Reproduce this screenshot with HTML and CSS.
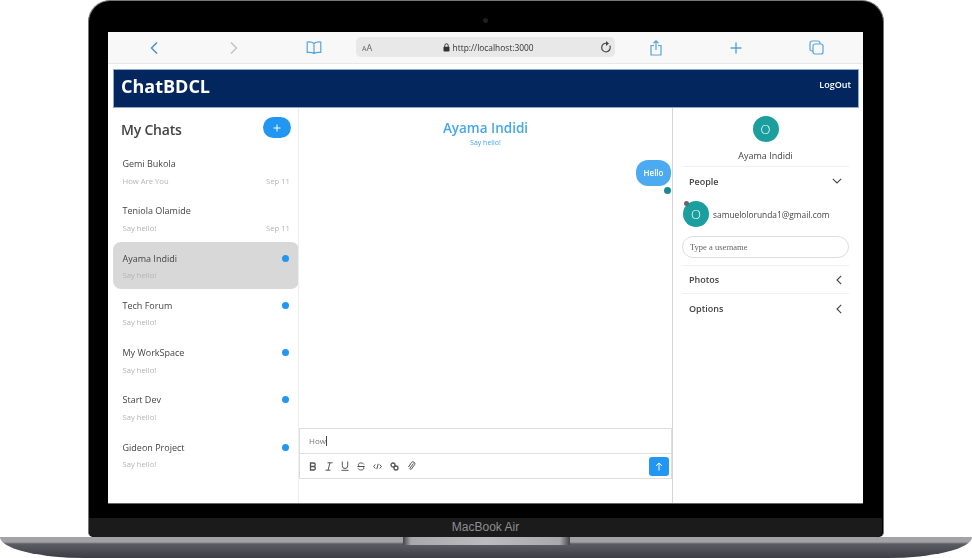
FILE: index.html
```html
<!DOCTYPE html>
<html lang="en">
<head>
    <meta charset="UTF-8">
    <title>ChatBDCL</title>
    <link rel="stylesheet" href="styles.css">
</head>
<body>
    <div class="laptop">
        <div class="lid">
            <div class="lid-top"><span class="camera"></span></div>
            <div class="screen">
                <div class="safari">
                    <div class="safari-cell">
                        <svg width="10" height="14" viewBox="0 0 10 14"><path d="M8 1.5 2.5 7 8 12.5" fill="none" stroke="#4a90c8" stroke-width="1.5"/></svg>
                    </div>
                    <div class="safari-cell">
                        <svg width="10" height="14" viewBox="0 0 10 14"><path d="M2 1.5 7.5 7 2 12.5" fill="none" stroke="#c4c4c4" stroke-width="1.5"/></svg>
                    </div>
                    <div class="safari-cell">
                        <svg width="16" height="13" viewBox="0 0 16 13"><path d="M8 2.5C6.5 1 4 .8 1.2 1v10.4c2.800-.2 5.300 0 6.800 1 1.500-1 4-1.200 6.800-1V1C12 .8 9.500 1 8 2.500Zm0 0v10" fill="none" stroke="#5aa3da" stroke-width="1.200"/></svg>
                    </div>
                    <div class="url-bar">
                        <span class="url-aa"><small>A</small>A</span>
                        <span class="url-text">
                            <svg width="7" height="9" viewBox="0 0 7 9"><path d="M1.800 4V2.500a1.700 1.700 0 0 1 3.400 0V4" fill="none" stroke="#333" stroke-width="1"/><rect x=".5" y="3.800" width="6" height="4.700" rx=".8" fill="#333"/></svg>
                            http://localhost:3000
                        </span>
                        <svg class="url-reload" width="12" height="13" viewBox="0 0 12 13"><path d="M9.800 4.600a4.300 4.300 0 1 1-2.700-2.200" fill="none" stroke="#444" stroke-width="1.200"/><path d="M6 0v5l3-2.500z" fill="#444"/></svg>
                    </div>
                    <div class="safari-cell">
                        <svg width="12" height="16" viewBox="0 0 12 16"><path d="M4 5.500H1v9.500h10V5.500H8M6 10V1M3.500 3.200 6 .8l2.500 2.400" fill="none" stroke="#5aa3da" stroke-width="1.200"/></svg>
                    </div>
                    <div class="safari-cell">
                        <svg width="12" height="12" viewBox="0 0 12 12"><path d="M6 .5v11M.5 6h11" fill="none" stroke="#5aa3da" stroke-width="1.400"/></svg>
                    </div>
                    <div class="safari-cell">
                        <svg width="15" height="15" viewBox="0 0 15 15"><rect x="4" y="4" width="10" height="10" rx="2" fill="none" stroke="#5aa3da" stroke-width="1.200"/><path d="M4 11H3a2 2 0 0 1-2-2V3a2 2 0 0 1 2-2h6a2 2 0 0 1 2 2v1" fill="none" stroke="#5aa3da" stroke-width="1.200"/></svg>
                    </div>
                </div>

                <div class="app">
                    <header class="app-header">
                        <span class="logo">ChatBDCL</span>
                        <a class="logout">LogOut</a>
                    </header>
                    <div class="columns">
                        <aside class="chats">
                            <div class="chats-head">
                                <h2>My Chats</h2>
                                <button class="add-btn">
                                    <svg width="8" height="8" viewBox="0 0 8 8"><path d="M4 .5v7M.5 4h7" stroke="#fff" stroke-width="1"/></svg>
                                </button>
                            </div>
                            <div class="chat">
                                <div class="chat-row"><span class="chat-name">Gemi Bukola</span></div>
                                <div class="chat-row"><span class="chat-msg">How Are You</span><span class="chat-date">Sep 11</span></div>
                            </div>
                            <div class="chat">
                                <div class="chat-row"><span class="chat-name">Teniola Olamide</span></div>
                                <div class="chat-row"><span class="chat-msg">Say hello!</span><span class="chat-date">Sep 11</span></div>
                            </div>
                            <div class="chat active">
                                <div class="chat-row"><span class="chat-name">Ayama Indidi</span><span class="unread"></span></div>
                                <div class="chat-row"><span class="chat-msg">Say hello!</span></div>
                            </div>
                            <div class="chat">
                                <div class="chat-row"><span class="chat-name">Tech Forum</span><span class="unread"></span></div>
                                <div class="chat-row"><span class="chat-msg">Say hello!</span></div>
                            </div>
                            <div class="chat">
                                <div class="chat-row"><span class="chat-name">My WorkSpace</span><span class="unread"></span></div>
                                <div class="chat-row"><span class="chat-msg">Say hello!</span></div>
                            </div>
                            <div class="chat">
                                <div class="chat-row"><span class="chat-name">Start Dev</span><span class="unread"></span></div>
                                <div class="chat-row"><span class="chat-msg">Say hello!</span></div>
                            </div>
                            <div class="chat">
                                <div class="chat-row"><span class="chat-name">Gideon Project</span><span class="unread"></span></div>
                                <div class="chat-row"><span class="chat-msg">Say hello!</span></div>
                            </div>
                        </aside>

                        <main class="feed">
                            <div class="feed-head">
                                <div class="feed-title">Ayama Indidi</div>
                                <div class="feed-sub">Say hello!</div>
                            </div>
                            <div class="messages">
                                <div class="bubble">Hello</div>
                                <span class="read-dot"></span>
                            </div>
                            <div class="composer">How<span class="caret"></span></div>
                            <div class="toolbar">
                                <svg width="8" height="9" viewBox="0 0 8 9"><path d="M1.500 1h3a1.700 1.700 0 0 1 0 3.500h-3zm0 3.500h3.500a1.800 1.800 0 0 1 0 3.500H1.500z" fill="none" stroke="#555" stroke-width="1.300"/></svg>
                                <svg width="8" height="9" viewBox="0 0 8 9"><path d="M2.500.8h5M.5 8.200h5M5 .8 3 8.200" fill="none" stroke="#555" stroke-width="1"/></svg>
                                <svg width="8" height="10" viewBox="0 0 8 10"><path d="M1.300.5v4.300a2.700 2.700 0 0 0 5.400 0V.5M.5 9.300h7" fill="none" stroke="#555" stroke-width="1"/></svg>
                                <svg width="8" height="9" viewBox="0 0 8 9"><path d="M6.800 2.300C6 .4 1.400.4 1.400 2.700c0 .8.500 1.300 1.100 1.700M1.200 6.500c.8 2 5.600 2.100 5.600-.2 0-.7-.3-1.300-.8-1.700M.3 4.500h7.400" fill="none" stroke="#555" stroke-width="1"/></svg>
                                <svg width="9" height="7" viewBox="0 0 9 7"><path d="M2.300 1.500.6 3.500l1.700 2M6.700 1.500l1.700 2-1.700 2M5.200.8 3.800 6.200" fill="none" stroke="#555" stroke-width="1"/></svg>
                                <svg width="9" height="9" viewBox="0 0 9 9"><circle cx="3" cy="3" r="2" fill="none" stroke="#555" stroke-width="1.300"/><circle cx="6" cy="6" r="2" fill="none" stroke="#555" stroke-width="1.300"/></svg>
                                <svg width="9" height="10" viewBox="0 0 9 10"><path d="M6.500 2.500 3 7a.9.9 0 0 0 1.400 1.100l3.300-4.600A1.900 1.900 0 0 0 4.700 1.300L1.400 6" fill="none" stroke="#555" stroke-width="1"/></svg>
                                <button class="send-btn">
                                    <svg width="8" height="9" viewBox="0 0 8 9"><path d="M4 8.500V1M1 3.800 4 1l3 2.800" fill="none" stroke="#fff" stroke-width="1"/></svg>
                                </button>
                            </div>
                        </main>

                        <aside class="details">
                            <div class="details-user">
                                <div class="avatar">O</div>
                                <div class="details-name">Ayama Indidi</div>
                            </div>
                            <div class="section section-people">
                                <span>People</span>
                                <svg width="10" height="6" viewBox="0 0 10 6"><path d="M.8.8 5 5 9.200.8" fill="none" stroke="#444" stroke-width="1.100"/></svg>
                            </div>
                            <div class="member">
                                <div class="avatar"><span class="status-dot"></span>O</div>
                                <span class="member-mail">samuelolorunda1@gmail.com</span>
                            </div>
                            <input class="user-input" type="text" placeholder="Type a username">
                            <div class="section section-photos">
                                <span>Photos</span>
                                <svg width="6" height="10" viewBox="0 0 6 10"><path d="M5.200.8 1 5l4.200 4.200" fill="none" stroke="#444" stroke-width="1.100"/></svg>
                            </div>
                            <div class="section section-options">
                                <span>Options</span>
                                <svg width="6" height="10" viewBox="0 0 6 10"><path d="M5.200.8 1 5l4.200 4.200" fill="none" stroke="#444" stroke-width="1.100"/></svg>
                            </div>
                        </aside>
                    </div>
                </div>
            </div>
            <div class="chin">MacBook Air</div>
        </div>
        <div class="base"><span class="notch"></span></div>
    </div>
</body>
</html>
```

FILE: styles.css
```css
* {
    box-sizing: border-box;
}

body {
    margin: 0;
    background-color: white;
    font-family: "Open Sans", sans-serif;
    overflow: hidden;
}

.laptop {
    width: 972px;
    height: 558px;
}

/* Lid */
.lid {
    width: 796px;
    height: 537px;
    margin-left: 88px;
    padding: 0 20px 0 19px;
    background-color: black;
    border: 1px solid #777;
    border-bottom: none;
    border-radius: 22px 22px 5px 5px;
    display: flex;
    flex-direction: column;
}

.lid-top {
    height: 31px;
    display: flex;
    justify-content: center;
    align-items: center;
    padding-top: 8px;
    flex: none;
}

.camera {
    width: 5px;
    height: 5px;
    border-radius: 50%;
    background-color: #1e1e1e;
}

.screen {
    height: 472px;
    flex: none;
    background-color: white;
    border-bottom: 1px solid #666;
    display: flex;
    flex-direction: column;
    filter: blur(.35px);
}

.chin {
    height: 19px;
    margin: 14px -19px 0;
    flex: none;
    background-color: #1b1b1b;
    border-radius: 0 0 5px 5px;
    color: #8e8e8e;
    font-family: "Liberation Sans", sans-serif;
    font-size: 12px;
    line-height: 19px;
    text-align: center;
}

/* Base */
.base {
    height: 21px;
    background: linear-gradient(to bottom, #a3a3a5 0, #a3a3a5 5px, #5b5c64 7px, #3c3d44 100%);
    border-radius: 0 0 85px 85px / 0 0 21px 21px;
    display: flex;
    justify-content: center;
}

.notch {
    width: 167px;
    height: 8px;
    margin-left: 1px;
    background: linear-gradient(to right, #444 0, #a9a9ab 8px, #bcbcbe 50%, #a9a9ab 94%, #444 100%);
}

/* Browser bar */
.safari {
    height: 32px;
    flex: none;
    padding: 0 7px 0 6px;
    background-color: #f8f8f8;
    border-bottom: 1px solid #e8e8e8;
    display: flex;
    align-items: center;
}

.safari-cell {
    width: 80px;
    display: flex;
    justify-content: center;
    align-items: center;
}

.url-bar {
    width: 259px;
    height: 20px;
    margin: 0 1px 1px 2px;
    padding: 0 3px 0 6px;
    background-color: #e8e8e8;
    border-radius: 5px;
    display: flex;
    align-items: center;
    justify-content: space-between;
    font-size: 8.400px;
    color: #333;
}

.url-aa {
    color: #666;
    font-size: 9px;
}

.url-aa small {
    font-size: 7px;
}

.url-text {
    display: flex;
    align-items: center;
    gap: 3px;
    margin-left: 4px;
}

/* App */
.app {
    flex: 1;
    padding: 5px 4px 0 5px;
    display: flex;
    flex-direction: column;
    min-height: 0;
}

.app-header {
    height: 39px;
    flex: none;
    padding: 0 7px;
    background-color: #03265f;
    border: 1px solid #8fa8cc;
    color: white;
    display: flex;
    justify-content: space-between;
}

.logo {
    font-size: 18px;
    font-weight: 700;
    line-height: 33px;
}

.logout {
    font-size: 9px;
    font-weight: 600;
    line-height: 29px;
}

.columns {
    flex: 1;
    display: flex;
    min-height: 0;
}

/* Chat list */
.chats {
    width: 186px;
    flex: none;
}

.chats-head {
    height: 39px;
    padding: 8px 8px 0 8px;
    display: flex;
    justify-content: space-between;
    align-items: flex-start;
}

.chats-head h2 {
    margin: 4px 0 0;
    font-size: 14px;
    font-weight: 600;
    letter-spacing: -.2px;
    color: #444;
}

.add-btn {
    width: 28px;
    height: 21px;
    margin-top: 1px;
    padding: 0;
    border: none;
    border-radius: 11px;
    background-color: #2196f3;
    display: flex;
    justify-content: center;
    align-items: center;
}

.chat {
    height: 47.300px;
    padding: 8px 10px 0 9.500px;
    border-radius: 8px;
}

.chat.active {
    background-color: #d8d8d8;
}

.chat-row {
    height: 17px;
    display: flex;
    justify-content: space-between;
    align-items: center;
}

.chat-name {
    font-size: 9px;
    color: #444;
}

.chat-msg,
.chat-date {
    font-size: 7.700px;
    color: #b4b4b4;
}

.chat-date {
    margin-right: -1px;
}

.unread {
    width: 7px;
    height: 7px;
    border-radius: 50%;
    background-color: #2196f3;
}

/* Conversation */
.feed {
    width: 375px;
    flex: none;
    margin-left: -1px;
    border-left: 1px solid #eeeeee;
    border-right: 1px solid #d4d4d4;
    display: flex;
    flex-direction: column;
}

.feed-head {
    height: 52px;
    flex: none;
    padding-top: 11px;
    text-align: center;
    color: #46a8ea;
}

.feed-title {
    font-size: 13.500px;
    font-weight: 600;
    line-height: 18px;
}

.feed-sub {
    margin-top: 1px;
    font-size: 7px;
    line-height: 10px;
}

.messages {
    flex: 1;
    display: flex;
    flex-direction: column;
    align-items: flex-end;
}

.bubble {
    width: 35px;
    height: 26px;
    margin-right: 1px;
    background-color: #4cabf0;
    border-radius: 12px;
    color: white;
    font-size: 8px;
    line-height: 26px;
    text-align: center;
    font-weight: 600;
}

.read-dot {
    width: 7px;
    height: 7px;
    margin: 1px 1px 0 0;
    border-radius: 50%;
    background-color: #1a8a90;
}

.composer {
    height: 26px;
    flex: none;
    padding-left: 9px;
    border: 1px solid #dedede;
    color: #777;
    font-size: 8px;
    line-height: 24px;
    display: flex;
    align-items: center;
}

.caret {
    width: 1px;
    height: 10px;
    background-color: #444;
}

.toolbar {
    height: 25px;
    flex: none;
    margin-bottom: 24px;
    padding: 0 2px 0 9px;
    border: 1px solid #dedede;
    border-top: none;
    display: flex;
    align-items: center;
    gap: 8px;
}

.toolbar svg {
    flex: none;
}

.send-btn {
    width: 20px;
    height: 19px;
    margin-left: auto;
    padding: 0;
    border: none;
    border-radius: 3px;
    background-color: #2196f3;
    display: flex;
    justify-content: center;
    align-items: center;
}

/* Right panel */
.details {
    flex: 1;
    padding: 0 10px 0 9px;
    color: #444;
}

.details-user {
    height: 59px;
    padding-top: 8px;
    border-bottom: 1px solid #f0f0f0;
    text-align: center;
}

.avatar {
    position: relative;
    width: 26px;
    height: 26px;
    margin: 0 auto;
    background-color: #1a9e9e;
    border-radius: 50%;
    color: white;
    font-size: 13px;
    font-weight: 300;
    line-height: 26px;
    text-align: center;
    flex: none;
}

.status-dot {
    position: absolute;
    left: 1px;
    top: 0;
    width: 5px;
    height: 5px;
    border-radius: 50%;
    background-color: #666;
}

.details-name {
    margin-top: 7px;
    font-size: 9px;
    line-height: 14px;
}

.section {
    display: flex;
    justify-content: space-between;
    align-items: center;
    padding: 0 7px;
    font-size: 9px;
    font-weight: 600;
}

.section-people {
    height: 28px;
}

.section-photos {
    height: 28px;
    border-top: 1px solid #f0f0f0;
    margin-top: 7px;
}

.section-options {
    height: 30px;
    border-top: 1px solid #f0f0f0;
}

.member {
    display: flex;
    align-items: center;
    gap: 4px;
    margin: 6px 0 0 1px;
    font-size: 8.400px;
}

.member .avatar {
    margin: 0;
}

.user-input {
    display: block;
    width: 167px;
    height: 22px;
    margin: 9px 0 0;
    padding: 0 7px;
    border: 1px solid #dedede;
    border-radius: 11px;
    font-family: "Liberation Serif", serif;
    font-size: 8.500px;
    outline: none;
}

.user-input::placeholder {
    color: #666;
}
```
